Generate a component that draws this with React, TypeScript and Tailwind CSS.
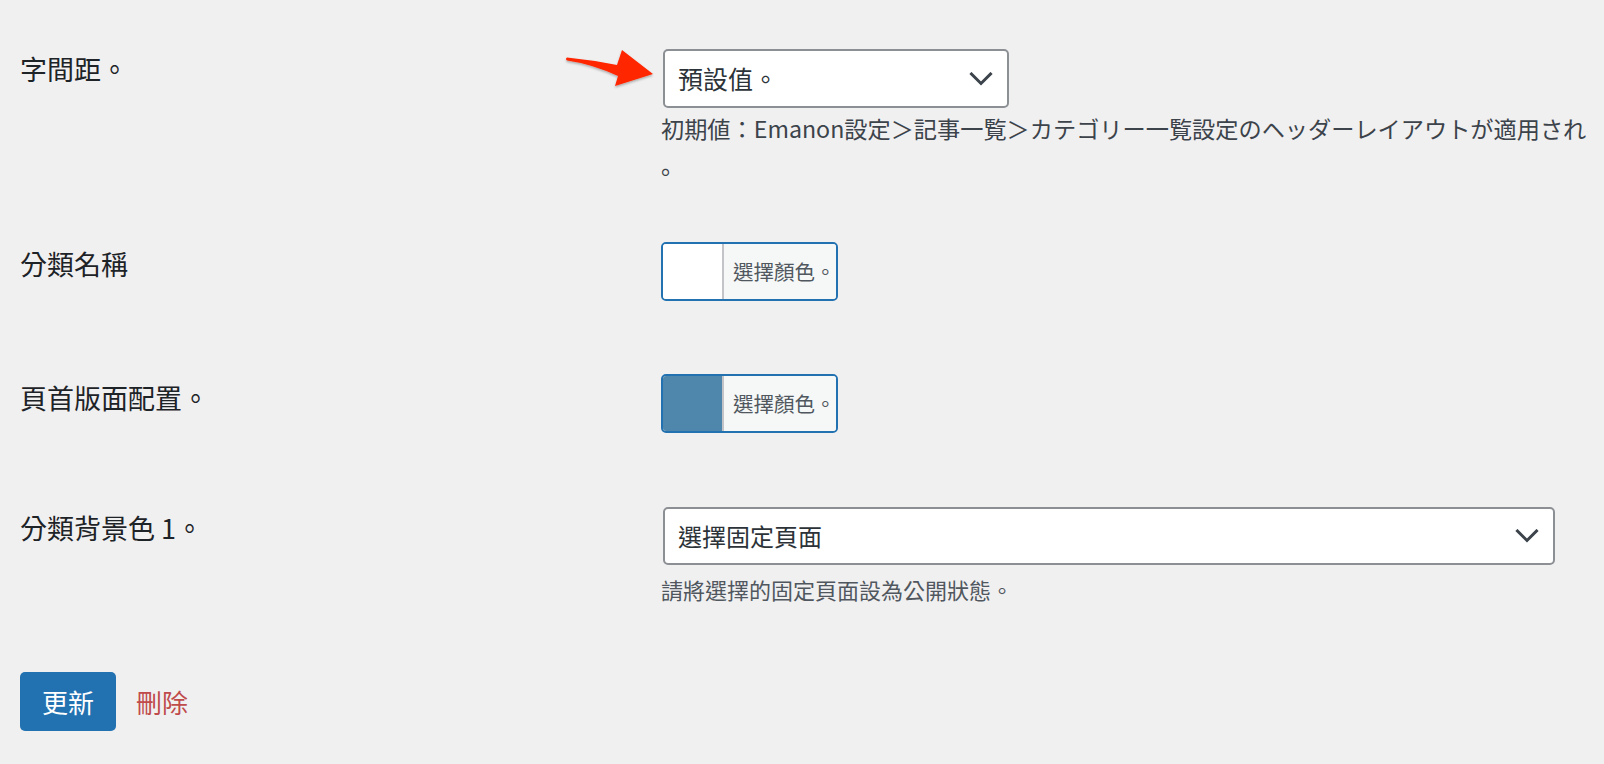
import React from "react";

function Chevron() {
    return (
        <svg width="24" height="14" viewBox="0 0 24 14" fill="none">
            <polyline points="2.5,2 12,11.5 21.5,2" stroke="#3c434a" strokeWidth="3" strokeLinecap="square" />
        </svg>
    );
}

function ColorButton({ swatch }: { swatch: string }) {
    return (
        <div className="flex w-[177px] h-[59px] border-2 border-[#2271b1] rounded-[5px] overflow-hidden">
            <div className={`shrink-0 w-[61px] h-full border-r-2 border-[#c3c4c7] ${swatch}`}></div>
            <div className="flex-1 min-w-0 flex items-center pl-[9px] bg-[#f6f7f7] text-[20.5px] leading-none text-[#50575e] whitespace-nowrap">
                選擇顏色。
            </div>
        </div>
    );
}

export default function App() {
    return (
        <div className="relative min-h-screen bg-[#f0f0f1] text-[#1d2327] [font-family:'Noto_Sans_CJK_TC','Noto_Sans_CJK_JP',sans-serif]">
            <div className="px-[20px] pt-[49px]">
                {/* 字間距 */}
                <div className="grid grid-cols-[641px_1fr]">
                    <div className="pt-[2px] text-[27px] leading-[36px]">字間距。</div>
                    <div>
                        <div className="ml-[2px] flex items-center justify-between w-[346px] h-[59px] pl-[13px] pr-[14px] bg-white border-2 border-[#8c8f94] rounded-[5px]">
                            <span className="text-[25px] text-[#2c3338]">預設值。</span>
                            <Chevron />
                        </div>
                        <p className="mt-[2px] whitespace-nowrap text-[23.2px] leading-[36px] text-[#3c434a] [font-family:'Noto_Sans_CJK_JP','Noto_Sans_CJK_TC',sans-serif]">
                            初期値：Emanon設定＞記事一覧＞カテゴリー一覧設定のヘッダーレイアウトが適用され
                            <br />。
                        </p>
                    </div>
                </div>

                {/* 分類名稱 */}
                <div className="grid grid-cols-[641px_1fr] mt-[60px]">
                    <div className="pt-[4px] text-[27px] leading-[36px]">分類名稱</div>
                    <div>
                        <ColorButton swatch="bg-white" />
                    </div>
                </div>

                {/* 頁首版面配置 */}
                <div className="grid grid-cols-[641px_1fr] mt-[73px]">
                    <div className="pt-[6px] text-[27px] leading-[36px]">頁首版面配置。</div>
                    <div>
                        <ColorButton swatch="bg-[#4f86ab]" />
                    </div>
                </div>

                {/* 分類背景色 */}
                <div className="grid grid-cols-[641px_1fr] mt-[74px]">
                    <div className="pt-[3px] text-[27px] leading-[36px]">分類背景色 1。</div>
                    <div>
                        <div className="ml-[2px] flex items-center justify-between w-[892px] h-[58px] pl-[13px] pr-[14px] bg-white border-2 border-[#8c8f94] rounded-[5px]">
                            <span className="text-[24px] text-[#2c3338]">選擇固定頁面</span>
                            <Chevron />
                        </div>
                        <p className="mt-[7px] text-[22px] leading-[34px] text-[#50575e]">請將選擇的固定頁面設為公開狀態。</p>
                    </div>
                </div>

                {/* 操作 */}
                <div className="flex items-center mt-[66px]">
                    <button className="w-[96px] h-[59px] bg-[#2271b1] rounded-[5px] text-white text-[26px] leading-none">更新</button>
                    <a href="#" className="ml-[20px] text-[26px] text-[#bf4b4b]">刪除</a>
                </div>
            </div>

            {/* red pointer arrow */}
            <svg className="absolute left-[550px] top-[40px]" width="120" height="60" viewBox="0 0 120 60">
                <defs>
                    <filter id="arrowShadow" x="-20%" y="-20%" width="140%" height="160%">
                        <feDropShadow dx="0" dy="1.5" stdDeviation="1.2" floodColor="#000" floodOpacity="0.3" />
                    </filter>
                </defs>
                <path
                    d="M17 17.5 Q42 20 67 25 L72 10 L103 34 L65 46 L68 36 Q42 24 17 20.5 Q15 19 17 17.5 Z"
                    fill="#ff2600"
                    filter="url(#arrowShadow)"
                />
            </svg>
        </div>
    );
}
